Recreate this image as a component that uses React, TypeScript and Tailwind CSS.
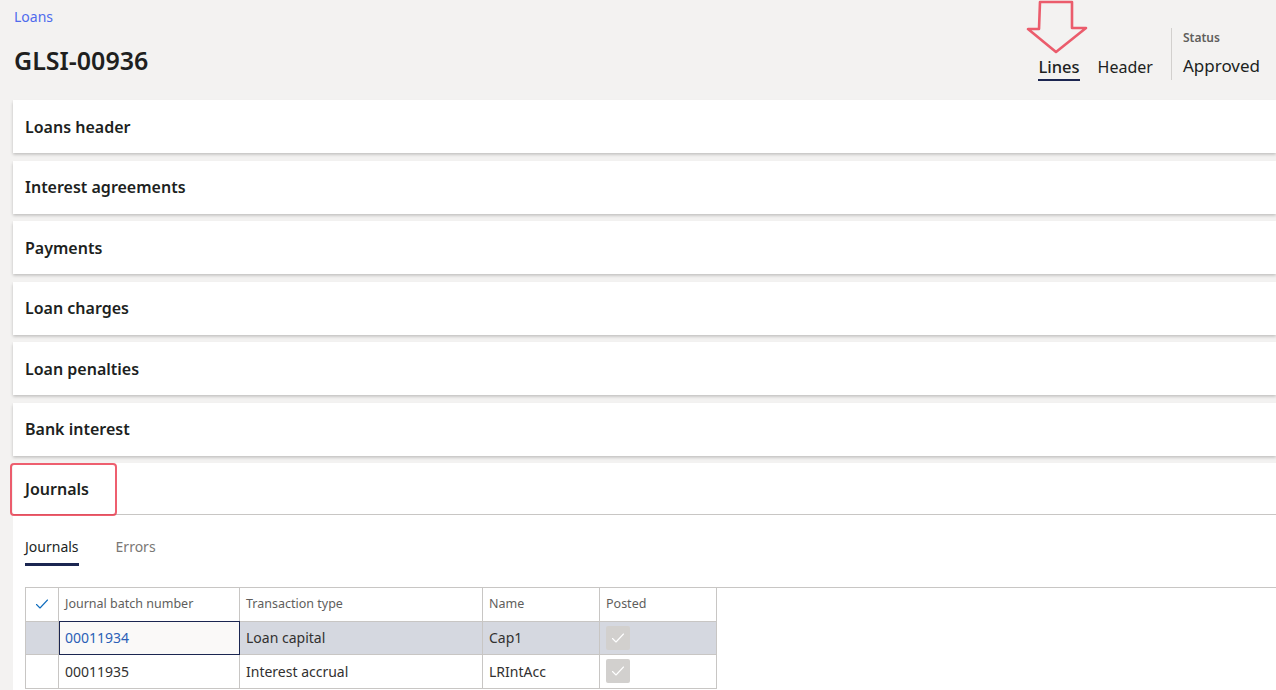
const FONT = { fontFamily: '"Noto Sans", "Open Sans", sans-serif' }

const SECTIONS = ['Loans header', 'Interest agreements', 'Payments', 'Loan charges', 'Loan penalties', 'Bank interest']

const ROWS = [
  { batch: '00011934', type: 'Loan capital', name: 'Cap1', selected: true },
  { batch: '00011935', type: 'Interest accrual', name: 'LRIntAcc', selected: false },
]

function Check({ className }: { className?: string }) {
  return (
    <svg viewBox="0 0 16 16" className={className} fill="none">
      <path d="M2.5 8.5l3.5 3.5 7.5-8" stroke="currentColor" strokeWidth={1.1} strokeLinecap="round" strokeLinejoin="round" />
    </svg>
  )
}

function RedArrow() {
  return (
    <svg width="64" height="56" viewBox="0 0 64 56" className="absolute left-[1024px] top-0" fill="none">
      <path
        d="M16 2 H48 V28 H62 L32 52 L4 29 H15 Z"
        stroke="#e8293f"
        strokeOpacity={0.75}
        strokeWidth={2.6}
        strokeLinejoin="round"
      />
    </svg>
  )
}

function SectionCard({ title }: { title: string }) {
  return (
    <div className="flex h-[53px] items-center bg-white pl-3 shadow-[0_1.6px_3px_rgba(0,0,0,0.22),0_0.3px_0.9px_rgba(0,0,0,0.1)]">
      <span className="text-[16px] font-semibold text-[#201f1e]">{title}</span>
    </div>
  )
}

function JournalsGrid() {
  return (
    <div className="ml-3 border-t border-[#c8c6c4]">
      <table className="border-collapse text-[14px] text-[#323130]">
        <thead>
          <tr className="h-[33px] text-left text-[12.5px] text-[#605e5c]">
            <th className="w-[33px] border-x border-b border-[#c8c6c4] font-normal">
              <Check className="mx-auto h-4 w-4 text-[#0f6cbd]" />
            </th>
            <th className="w-[181px] border-x border-b border-[#c8c6c4] px-[6px] font-normal">Journal batch number</th>
            <th className="w-[243px] border-x border-b border-[#c8c6c4] px-[6px] font-normal">Transaction type</th>
            <th className="w-[117px] border-x border-b border-[#c8c6c4] px-[6px] font-normal">Name</th>
            <th className="w-[117px] border-x border-b border-[#c8c6c4] px-[6px] font-normal">Posted</th>
          </tr>
        </thead>
        <tbody>
          {ROWS.map((r) => (
            <tr key={r.batch} className={`h-[33.5px] ${r.selected ? 'bg-[#d5d8e0]' : 'bg-white'}`}>
              <td className="border border-[#c8c6c4]" />
              <td
                className={
                  r.selected
                    ? 'border border-[#c8c6c4] bg-[#faf9f8] px-[6px] text-[#2b5fb7] outline outline-1 -outline-offset-1 outline-[#1b2651]'
                    : 'border border-[#c8c6c4] px-[6px]'
                }
              >
                {r.batch}
              </td>
              <td className="border border-[#c8c6c4] px-[6px]">{r.type}</td>
              <td className="border border-[#c8c6c4] px-[6px]">{r.name}</td>
              <td className="border border-[#c8c6c4] px-[6px]">
                <div className="flex h-6 w-6 items-center justify-center rounded-[2px] bg-[#d2d0ce]">
                  <Check className="h-4 w-4 text-white" />
                </div>
              </td>
            </tr>
          ))}
        </tbody>
      </table>
    </div>
  )
}

export default function App() {
  return (
    <div className="relative h-[690px] w-[1276px] overflow-hidden bg-[#f3f2f1]" style={FONT}>
      <RedArrow />
      <div className="flex h-[100px] items-start justify-between pl-[14px] pr-4">
        <div>
          <div className="pt-[7px] text-[14px] leading-5 text-[#4f6bed]">Loans</div>
          <h1 className="mt-[19px] text-[25px] font-semibold leading-7 text-[#201f1e]">GLSI-00936</h1>
        </div>
        <div className="flex items-start pt-7">
          <div className="flex items-end gap-[18px] pt-[28px]">
            <span className="border-b-2 border-[#1b2651] pb-[1px] text-[16.5px] font-medium leading-[22px] text-[#201f1e]">Lines</span>
            <span className="pb-[3px] text-[16px] leading-[22px] text-[#201f1e]">Header</span>
          </div>
          <div className="ml-[18px] h-[52px] border-l border-[#d2d0ce] pl-[11px]">
            <div className="pt-[2px] text-[12px] font-semibold leading-4 text-[#605e5c]">Status</div>
            <div className="mt-[8px] text-[17px] leading-6 text-[#201f1e]">Approved</div>
          </div>
        </div>
      </div>

      <div className="ml-[13px] flex flex-col gap-[7.5px]">
        {SECTIONS.map((s) => (
          <SectionCard key={s} title={s} />
        ))}
        <div className="relative bg-white pb-10">
          <div className="flex h-[52px] items-center border-b border-[#c8c6c4] pl-3">
            <span className="text-[16px] font-semibold text-[#201f1e]">Journals</span>
          </div>
          <div className="absolute -left-[3px] top-0 h-[53px] w-[107px] rounded-[4px] border-[2.5px] border-[#e8293f]/75" />
          <div className="flex gap-[37px] pl-3 pt-[21px] text-[14px]">
            <span className="border-b-[3px] border-[#1b2651] pb-[6px] text-[#201f1e]">Journals</span>
            <span className="text-[#797775]">Errors</span>
          </div>
          <div className="mt-[21px]">
            <JournalsGrid />
          </div>
        </div>
      </div>
    </div>
  )
}
